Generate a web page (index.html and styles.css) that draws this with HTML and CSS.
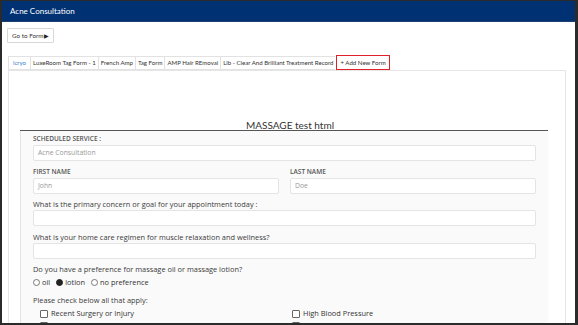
FILE: index.html
```html
<!DOCTYPE html>
<html>
<head>
<meta charset="utf-8">
<link rel="stylesheet" href="styles.css">
</head>
<body>
<div class="frame">
  <div class="header">Acne Consultation</div>
  <div class="main">
    <button class="goto">Go to Form<span class="arrow">&#9654;</span></button>
    <div class="tabs">
      <span class="tab active">lcryo</span>
      <span class="tab">LuxeRoom Tag Form - 1</span>
      <span class="tab">French Amp</span>
      <span class="tab">Tag Form</span>
      <span class="tab">AMP Hair REmoval</span>
      <span class="tab">Llb - Clear And Brilliant Treatment Record</span>
      <span class="tab add">+ Add New Form</span>
    </div>
    <div class="panel">
      <div class="title">MASSAGE test html</div>
      <div class="form">
        <div class="label caps">SCHEDULED SERVICE :</div>
        <div class="input ph">Acne Consultation</div>
        <div class="row">
          <div class="col">
            <div class="label caps">FIRST NAME</div>
            <div class="input ph">John</div>
          </div>
          <div class="col">
            <div class="label caps">LAST NAME</div>
            <div class="input ph">Doe</div>
          </div>
        </div>
        <div class="label">What is the primary concern or goal for your appointment today :</div>
        <div class="input"></div>
        <div class="label">What is your home care regimen for muscle relaxation and wellness?</div>
        <div class="input"></div>
        <div class="label">Do you have a preference for massage oil or massage lotion?</div>
        <div class="radios">
          <span class="opt"><span class="radio"></span>oil</span>
          <span class="opt"><span class="radio on"></span>lotion</span>
          <span class="opt"><span class="radio"></span>no preference</span>
        </div>
        <div class="label check-label">Please check below all that apply:</div>
        <div class="checks">
          <span class="chk"><span class="box"></span>Recent Surgery or Injury</span>
          <span class="chk"><span class="box"></span>High Blood Pressure</span>
          <span class="chk"><span class="box"></span>Blood Clots</span>
          <span class="chk"><span class="box"></span>Varicose Veins</span>
        </div>
      </div>
    </div>
  </div>
</div>
</body>
</html>
```

FILE: styles.css
```css
* { box-sizing: border-box; }
html, body { margin: 0; padding: 0; background: #fff; }
.frame {
  width: 578px;
  height: 325px;
  overflow: hidden;
  border-style: solid;
  border-color: #2b2b2b;
  border-width: 1px 3px 2px 2px;
  background: #fff;
}
.header {
  height: 21px;
  background: #003172;
  color: #fff;
  font-family: Lato, "Liberation Sans", sans-serif;
  font-size: 8px;
  line-height: 21px;
  padding-left: 8px;
  border-bottom: 1px solid #1d3f70;
}
.main {
  padding: 6px 0 0 5px;
  font-family: Lato, "Liberation Sans", sans-serif;
}
.goto {
  display: flex;
  align-items: center;
  height: 15px;
  padding: 0 4px;
  font-family: Lato, "Liberation Sans", sans-serif;
  font-size: 6.3px;
  color: #333;
  background: #fff;
  border: 1px solid #d8d8d8;
  border-radius: 1px;
}
.arrow { font-size: 5.5px; color: #222; }
.tabs {
  display: flex;
  margin-top: 12px;
  margin-left: 1px;
  align-items: flex-end;
}
.tab {
  font-size: 6.1px;
  color: #333;
  height: 14px;
  line-height: 12px;
  padding: 0 2px;
  border: 1px solid #e2e2e2;
  border-right: none;
}
.tab.active { color: #3a7fcf; padding: 0 4px; }
.tab.add {
  border: 1px solid #e0202a;
  margin-left: 1px;
  height: 15px;
  line-height: 13px;
  padding: 0 3px;
}
.panel {
  margin-left: 1px;
  width: 558px;
  height: 260px;
  border: 1px solid #e6e6e6;
  padding: 49px 17px 0 11px;
}
.title {
  text-align: center;
  font-family: Lato, "Liberation Sans", sans-serif;
  font-size: 10px;
  color: #333;
  line-height: 10px;
  padding-left: 12px;
  border-bottom: 1.5px solid #555;
}
.form {
  background: #fafafa;
  border-left: 1px solid #e4e4e4;
  padding: 4px 12px 0 12px;
  font-family: "Open Sans", "Noto Sans", sans-serif;
  color: #444;
  height: 200px;
}
.label {
  font-size: 7.4px;
  line-height: 8px;
  margin-bottom: 2px;
  color: #3a3a3a;
  white-space: nowrap;
}
.label.caps { font-weight: 600; font-size: 6.5px; color: #555; }
.input {
  height: 16px;
  background: #fff;
  border: 1px solid #e4e4e4;
  border-radius: 2px;
  font-size: 6.8px;
  line-height: 14px;
  padding-left: 4px;
  color: #999;
  margin-bottom: 6.5px;
}
.row { display: flex; gap: 11px; }
.col { flex: 1; }
.radios {
  display: flex;
  gap: 6px;
  font-size: 7.4px;
  line-height: 10px;
  color: #333;
  margin-top: 4px;
  margin-bottom: 9px;
}
.opt { display: flex; align-items: center; gap: 2px; }
.radio {
  width: 7px; height: 7px;
  border-radius: 50%;
  border: 1px solid #777;
  background: #fff;
}
.radio.on { background: #222; border-color: #222; }
.check-label { margin-bottom: 5px; }
.checks {
  display: grid;
  grid-template-columns: 252px 1fr;
  row-gap: 3px;
  padding-left: 7px;
  font-size: 7.4px;
  color: #333;
}
.chk { display: flex; align-items: center; gap: 3px; line-height: 9px; white-space: nowrap; }
.box {
  width: 8px; height: 8px;
  border: 1px solid #666;
  border-radius: 1px;
  background: #fff;
}
```
